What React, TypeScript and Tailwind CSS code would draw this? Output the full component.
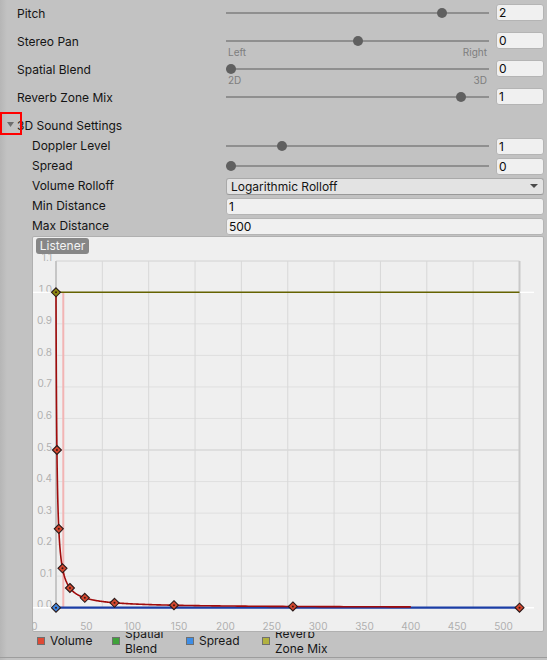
import React from "react";

const X0 = 33;
const Y0 = 237;
const xv = (d: number) => 56 + (d - 1) * 0.9289 - X0;
const yv = (v: number) => 607.7 - 315.4 * v - Y0;

function Slider({ frac, left, right }: { frac: number; left?: string; right?: string }) {
  return (
    <div className="w-[264px] flex flex-col">
      <div className="relative h-[17px]">
        <div className="absolute left-0 right-[1px] top-[7.5px] h-[2px] bg-[#8f8f8f]" />
        <div
          className="absolute top-[3.5px] w-[10px] h-[10px] rounded-full bg-[#606060]"
          style={{ left: frac * 253 }}
        />
      </div>
      {left !== undefined && (
        <div className="flex justify-between h-[6px] leading-[6px] text-[10px] text-[#7e7e7e] pl-[2px] pr-[3px]">
          <span>{left}</span>
          <span>{right}</span>
        </div>
      )}
    </div>
  );
}

function Field({ value, wide }: { value: string; wide?: boolean }) {
  return (
    <div
      className={
        (wide ? "w-[318px]" : "w-[48px]") +
        " h-[17px] bg-[#f0f0f0] border border-[#b4b4b4] rounded-[3px] text-[12px] leading-[15px] pl-[2px] text-[#0c0c0c]"
      }
    >
      {value}
    </div>
  );
}

function TopRow({ label, frac, value, left, right }: { label: string; frac: number; value: string; left?: string; right?: string }) {
  return (
    <div className="flex h-[28px]">
      <div className="w-[226px] pl-[17px] leading-[28px]">{label}</div>
      <div className="flex pt-[4px] gap-[6px]">
        <Slider frac={frac} left={left} right={right} />
        <Field value={value} />
      </div>
    </div>
  );
}

function SubRow({ label, children }: { label: string; children: React.ReactNode }) {
  return (
    <div className="flex h-[20px] items-center">
      <div className="w-[226px] pl-[32px] leading-[20px]">{label}</div>
      <div className="flex items-center gap-[6px]">{children}</div>
    </div>
  );
}

function Key({ x, y, fill }: { x: number; y: number; fill: string }) {
  return (
    <g transform={`translate(${x},${y})`}>
      <polygon points="0,-4.5 4.5,0 0,4.5 -4.5,0" fill={fill} stroke="#2a1a1a" strokeWidth={1.1} />
      <circle r={1} fill="#3a1a14" />
    </g>
  );
}

function Chart() {
  const left = 23;
  const right = 486.5;
  const top = 24;
  const bottom = yv(0);
  const gridX = Array.from({ length: 11 }, (_, k) => 56 + 46.35 * k - X0);
  const yVals = [0, 0.1, 0.2, 0.3, 0.4, 0.5, 0.6, 0.7, 0.8, 0.9, 1.0, 1.1];
  const xLabels = [0, 50, 100, 150, 200, 250, 300, 350, 400, 450, 500];

  const pts: string[] = [];
  const N = 400;
  for (let i = 0; i <= N; i++) {
    const d = Math.pow(383, i / N);
    pts.push(`${xv(d).toFixed(2)},${yv(1 / d).toFixed(2)}`);
  }
  const keys = [2, 4, 8, 16, 32, 64, 128, 256];

  return (
    <svg width={510} height={394} className="block">
      {yVals.slice(1, 11).map((v) => (
        <line
          key={v}
          x1={left}
          x2={right}
          y1={yv(v)}
          y2={yv(v)}
          stroke={Math.abs(v - 0.5) < 0.01 ? "#cdcdcd" : "#dfdfdf"}
          strokeWidth={1}
        />
      ))}
      <line x1={left} x2={right} y1={top} y2={top} stroke="#d2d2d2" strokeWidth={1} />
      {gridX.slice(1, 10).map((x, i) => (
        <line key={i} x1={x} x2={x} y1={top} y2={bottom} stroke="#d8d8d8" strokeWidth={1} />
      ))}
      <line x1={left} x2={left} y1={top} y2={bottom} stroke="#c6c6c6" strokeWidth={2} />
      <line x1={right} x2={right} y1={top} y2={bottom} stroke="#c9c9c9" strokeWidth={2} />

      {yVals.map((v) => (
        <text
          key={v}
          x={19}
          y={yv(v) + 0.5}
          textAnchor="end"
          fontSize={10}
          fill="#afafaf"
          fontFamily="Inter, sans-serif"
        >
          {v.toFixed(1)}
        </text>
      ))}
      {xLabels.map((v, k) => (
        <text
          key={v}
          x={k === 0 ? 1.5 : gridX[k] - 16}
          y={393}
          textAnchor="middle"
          fontSize={10}
          fill="#afafaf"
          fontFamily="Inter, sans-serif"
        >
          {v}
        </text>
      ))}

      <line x1={30.3} x2={30.3} y1={yv(1)} y2={bottom} stroke="#f2b4b4" strokeWidth={2} />

      <line x1={0} x2={left} y1={yv(1)} y2={yv(1)} stroke="#ffffff" strokeWidth={1.3} />
      <line x1={right} x2={501} y1={yv(1)} y2={yv(1)} stroke="#ffffff" strokeWidth={1.3} />
      <line x1={left} x2={right} y1={yv(1)} y2={yv(1)} stroke="#656300" strokeWidth={1.6} />

      <line x1={0} x2={left} y1={bottom} y2={bottom} stroke="#ffffff" strokeWidth={1.5} />
      <line x1={right} x2={501} y1={bottom} y2={bottom} stroke="#ffffff" strokeWidth={1.5} />
      <line x1={left} x2={right} y1={bottom} y2={bottom} stroke="#1b3ea6" strokeWidth={2.2} />

      <polyline points={pts.join(" ")} fill="none" stroke="#a00b0b" strokeWidth={1.6} />

      {keys.map((d) => (
        <Key key={d} x={xv(d)} y={yv(1 / d)} fill="#d4472f" />
      ))}
      <Key x={right} y={bottom} fill="#d4472f" />
      <Key x={left} y={bottom} fill="#3f86e0" />
      <Key x={left} y={yv(1)} fill="#8e8a14" />
    </svg>
  );
}

function LegendItem({ color, label, w, textW }: { color: string; label: string; w: string; textW?: string }) {
  return (
    <div className={"flex items-center gap-[5px] " + w}>
      <span className={"w-[8px] h-[8px] border border-[#6f6f6f] shrink-0 " + color} />
      <span className={"leading-[15px] " + (textW ?? "")}>{label}</span>
    </div>
  );
}

export default function App() {
  return (
    <div
      className="relative w-[547px] h-[660px] overflow-hidden bg-[linear-gradient(to_right,#b6b6b6_0px,#c2c2c2_7px)] text-[12px] text-[#141414]"
      style={{ fontFamily: 'Inter, "Noto Sans", sans-serif' }}
    >
      <TopRow label="Pitch" frac={5 / 6} value="2" />
      <TopRow label="Stereo Pan" frac={0.5} value="0" left="Left" right="Right" />
      <TopRow label="Spatial Blend" frac={0} value="0" left="2D" right="3D" />
      <TopRow label="Reverb Zone Mix" frac={1 / 1.1} value="1" />

      <div className="flex items-center h-[20px] mt-[4px] pl-[7px]">
        <svg width={7} height={5} className="-mt-[3px] mr-[3px]">
          <polygon points="0,0 7,0 3.5,5" fill="#6e6e6e" />
        </svg>
        <span>3D Sound Settings</span>
      </div>

      <SubRow label="Doppler Level">
        <Slider frac={0.2} />
        <Field value="1" />
      </SubRow>
      <SubRow label="Spread">
        <Slider frac={0} />
        <Field value="0" />
      </SubRow>
      <SubRow label="Volume Rolloff">
        <div className="w-[318px] h-[17px] bg-[#e3e3e3] border border-[#a9a9a9] border-b-[#999999] rounded-[3px] flex items-center justify-between pl-[4px] pr-[5px]">
          <span className="leading-[15px]">Logarithmic Rolloff</span>
          <svg width={8} height={4}>
            <polygon points="0,0 8,0 4,4" fill="#4a4a4a" />
          </svg>
        </div>
      </SubRow>
      <SubRow label="Min Distance">
        <Field value="1" wide />
      </SubRow>
      <SubRow label="Max Distance">
        <Field value="500" wide />
      </SubRow>

      <div className="relative ml-[32px] w-[512px] h-[396px] border border-[#b0b0b0] bg-[#efefef] overflow-hidden rounded-[2px]">
        <Chart />
        <div className="absolute left-[3px] top-[1px] w-[53px] h-[16px] rounded-[3px] bg-[#878787] text-[#f4f4f4] text-[12px] leading-[16px] text-center">
          Listener
        </div>
      </div>

      <div className="flex items-center h-[17px] pl-[37px] text-[#161616]">
        <LegendItem color="bg-[#df4934]" label="Volume" w="w-[75px]" />
        <LegendItem color="bg-[#3fa23a]" label="Spatial Blend" w="w-[74px]" textW="w-[44px]" />
        <LegendItem color="bg-[#3d8de6]" label="Spread" w="w-[76px]" />
        <LegendItem color="bg-[#b1b13f]" label="Reverb Zone Mix" w="w-[90px]" textW="w-[58px]" />
      </div>
      <div className="h-[8px]" />
      <div className="h-[1px] bg-[#9d9d9d]" />

      <div className="absolute left-0 top-[112px] w-[22px] h-[23px] border-2 border-[#ff0000]" />
    </div>
  );
}
